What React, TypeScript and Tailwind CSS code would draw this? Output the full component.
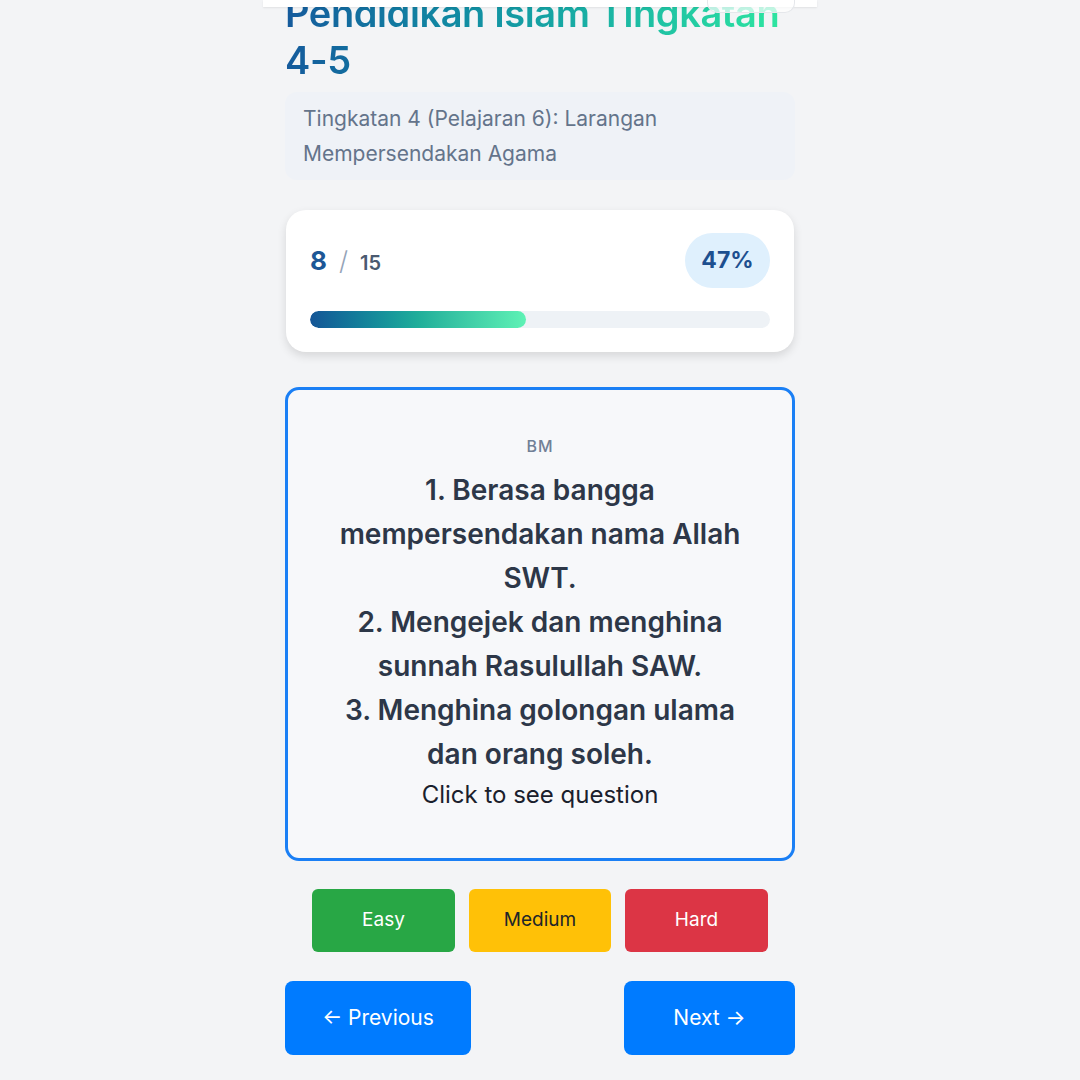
import React from "react";

export default function App() {
  const font = { fontFamily: "Inter, 'Noto Sans', sans-serif" };
  return (
    <div className="min-h-screen w-full bg-[#f3f4f6] flex justify-center" style={font}>
      <div className="w-[554px] pb-[40px]">
        <div className="relative z-10 h-[7px] bg-white shadow-[0_1px_2px_rgba(0,0,0,0.08)]">
          <div className="absolute right-[22px] top-0 w-[88px] h-[13px] rounded-b-[10px] bg-white/70 border border-t-0 border-[#e5e7eb]" />
        </div>
        <div className="px-[22px]">
          <h1 className="-mt-[17px] text-[38px] leading-[47px] font-semibold tracking-[-0.4px] bg-gradient-to-r from-[#155a9c] to-[#2ee6a0] bg-clip-text text-transparent w-[500px]">
            Pendidikan Islam Tingkatan 4-5
          </h1>
          <div className="mt-[8px] rounded-xl bg-[#eff2f7] px-[18px] py-[9px] text-[21px] leading-[35px] text-[#64748b]">
            Tingkatan 4 (Pelajaran 6): Larangan Mempersendakan Agama
          </div>

          <div className="mt-[30px] mx-[1px] rounded-[20px] bg-white shadow-[0_4px_10px_rgba(0,0,0,0.12)] px-[24px] pt-[23px] pb-[24px]">
            <div className="flex items-center justify-between">
              <div className="flex items-baseline gap-[12px]">
                <span className="text-[26px] font-bold text-[#1d5796]">8</span>
                <span className="text-[26px] font-light text-[#94a3b8]">/</span>
                <span className="text-[20px] font-semibold text-[#4a5a70]">15</span>
              </div>
              <div className="h-[55px] w-[85px] rounded-full bg-[#dff0fd] flex items-center justify-center text-[23px] font-bold text-[#1d4f8f]">
                47%
              </div>
            </div>
            <div className="mt-[23px] h-[17px] rounded-full bg-[#eef2f6] overflow-hidden">
              <div
                className="h-full rounded-full bg-gradient-to-r from-[#155596] via-[#1fae9a] to-[#5ef2b5]"
                style={{ width: "47%" }}
              />
            </div>
          </div>

          <div className="mt-[35px] rounded-[14px] border-[3px] border-[#1a7ff5] bg-[#f7f8fa] px-[30px] pt-[44px] pb-[44px] text-center">
            <div className="text-[16px] font-medium tracking-[1px] text-[#718096] leading-[24px]">BM</div>
            <div className="mt-[10px] text-[28px] font-semibold leading-[44px] text-[#2d3748] px-[10px]">
              1. Berasa bangga mempersendakan nama Allah SWT.
              <br />
              2. Mengejek dan menghina sunnah Rasulullah SAW.
              <br />
              3. Menghina golongan ulama dan orang soleh.
            </div>
            <div className="text-[24px] leading-[38px] text-[#1a202c]">Click to see question</div>
          </div>

          <div className="mt-[28px] flex justify-center gap-[14px]">
            <button className="w-[143px] h-[63px] rounded-[6px] bg-[#28a745] text-white text-[19px]">Easy</button>
            <button className="w-[142px] h-[63px] rounded-[6px] bg-[#ffc107] text-[#212529] text-[19px]">Medium</button>
            <button className="w-[143px] h-[63px] rounded-[6px] bg-[#dc3545] text-white text-[19px]">Hard</button>
          </div>

          <div className="mt-[29px] flex justify-between">
            <button className="w-[186px] h-[74px] rounded-[8px] bg-[#007bff] text-white text-[21px]">← Previous</button>
            <button className="w-[171px] h-[74px] rounded-[8px] bg-[#007bff] text-white text-[21px]">Next →</button>
          </div>
        </div>
      </div>
    </div>
  );
}
